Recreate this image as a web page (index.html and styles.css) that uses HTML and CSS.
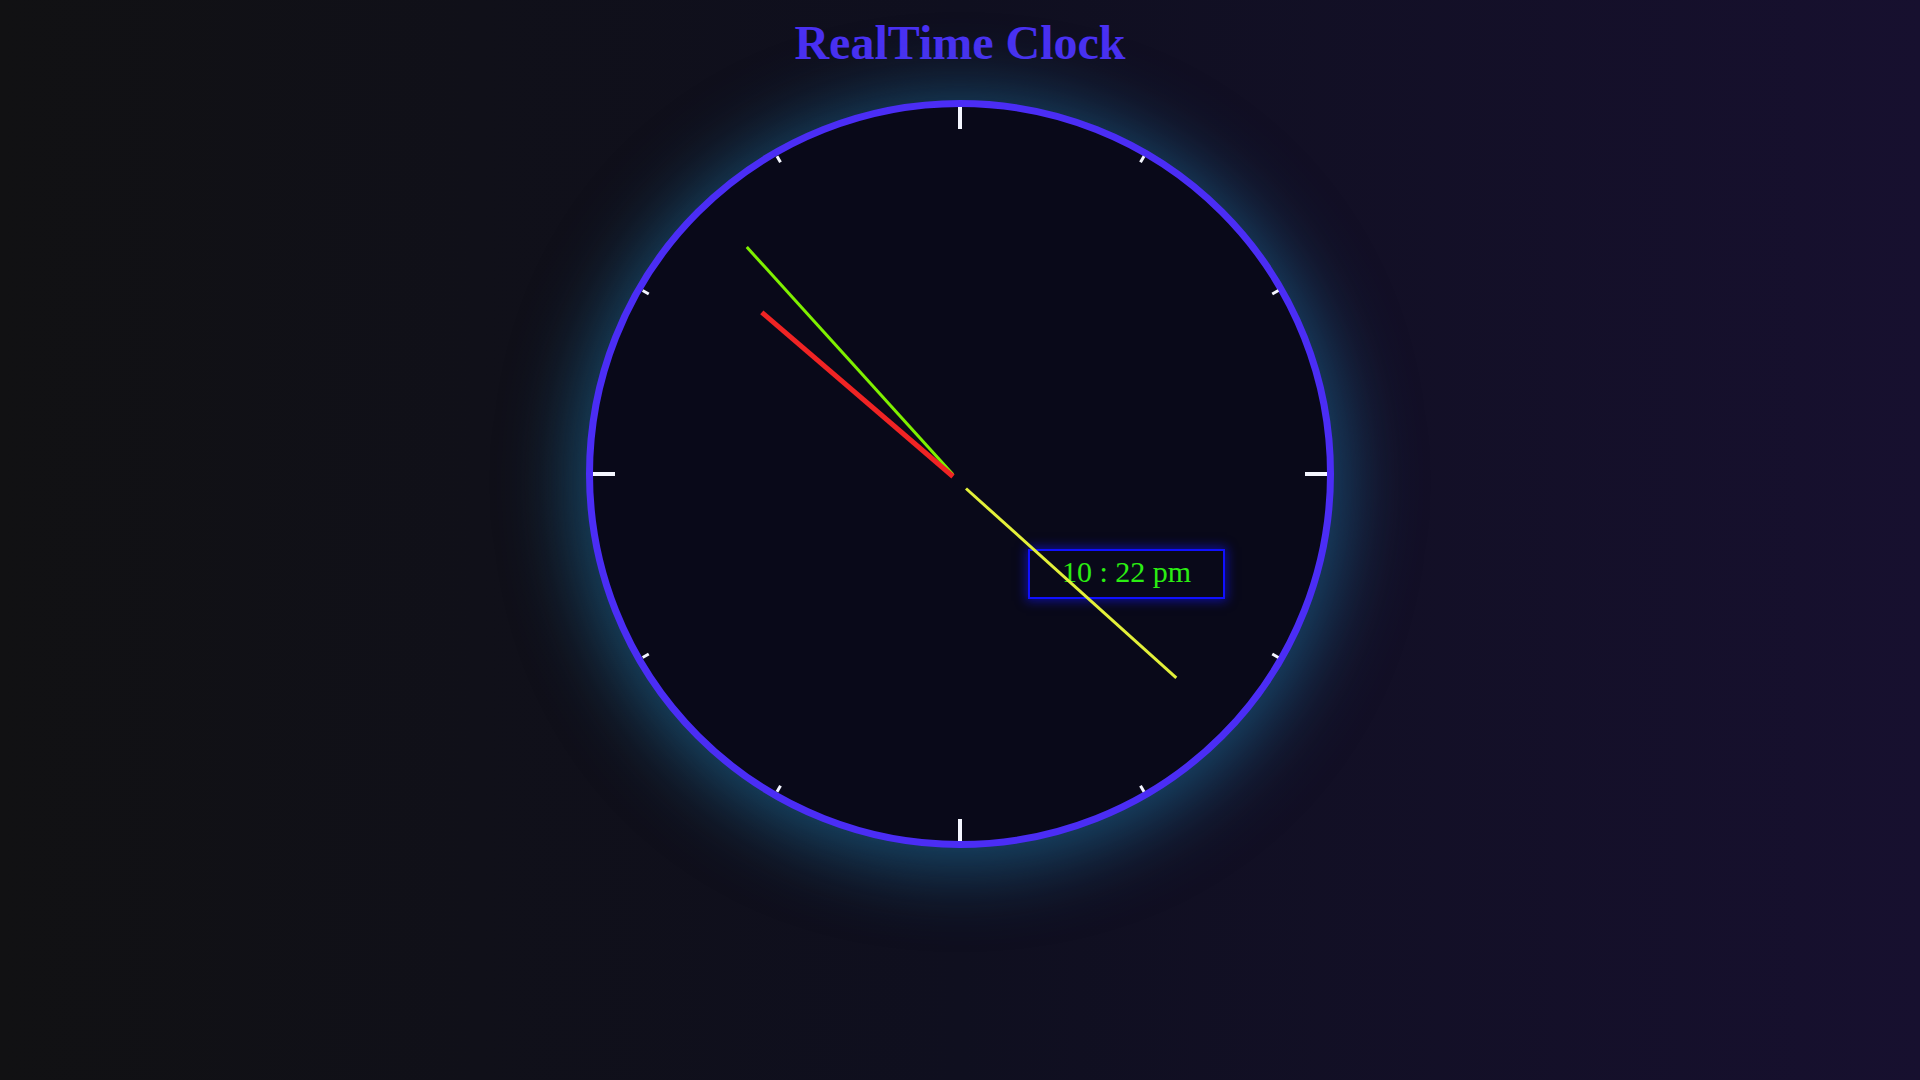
FILE: index.html
```html
<!DOCTYPE html>
<html lang="en">
<head>
<meta charset="utf-8">
<title>RealTime Clock</title>
<link rel="stylesheet" href="styles.css">
</head>
<body>
  <h1 class="title">RealTime Clock</h1>
  <div class="clock">
    <div class="tick big t0"></div>
    <div class="tick small t1"></div>
    <div class="tick small t2"></div>
    <div class="tick big t3"></div>
    <div class="tick small t4"></div>
    <div class="tick small t5"></div>
    <div class="tick big t6"></div>
    <div class="tick small t7"></div>
    <div class="tick small t8"></div>
    <div class="tick big t9"></div>
    <div class="tick small t10"></div>
    <div class="tick small t11"></div>
    <div class="digital">10 : 22 pm</div>
    <div class="hand second"></div>
    <div class="hand hour"></div>
    <div class="hand minute"></div>
  </div>
</body>
</html>
```
FILE: styles.css
```css
html, body {
  margin: 0;
  padding: 0;
}
body {
  width: 1920px;
  height: 1080px;
  overflow: hidden;
  background: linear-gradient(90deg, #111113 0%, #0f0f1f 50%, #17102f 100%);
  font-family: "Liberation Serif", "Times New Roman", serif;
}
.title {
  margin: 0;
  padding-top: 15px;
  line-height: 55px;
  font-size: 48px;
  font-weight: bold;
  text-align: center;
  color: #4a30f2;
}
.clock {
  position: relative;
  box-sizing: border-box;
  width: 748px;
  height: 748px;
  margin: 30px auto 0;
  border: 7px solid #4b2df5;
  border-radius: 50%;
  background: #090919;
  box-shadow: 0 8px 75px 8px rgba(30, 125, 175, 0.6);
}
.tick {
  position: absolute;
  top: 0;
  background: #f4f6ff;
}
.tick.big {
  left: 365px;
  width: 4px;
  height: 22px;
  transform-origin: 2px 367px;
}
.tick.small {
  left: 365.5px;
  width: 3px;
  height: 7px;
  transform-origin: 1.5px 367px;
}
.t1 { transform: rotate(30deg); }
.t2 { transform: rotate(60deg); }
.t3 { transform: rotate(90deg); }
.t4 { transform: rotate(120deg); }
.t5 { transform: rotate(150deg); }
.t6 { transform: rotate(180deg); }
.t7 { transform: rotate(210deg); }
.t8 { transform: rotate(240deg); }
.t9 { transform: rotate(270deg); }
.t10 { transform: rotate(300deg); }
.t11 { transform: rotate(330deg); }
.digital {
  position: absolute;
  left: 435px;
  top: 442px;
  box-sizing: border-box;
  width: 197px;
  height: 50px;
  padding-top: 4px;
  border: 2px solid #1010ff;
  box-shadow: 0 0 10px 2px rgba(20, 20, 255, 0.55);
  color: #2bee12;
  font-size: 30px;
  line-height: 34px;
  text-align: center;
}
.hand {
  position: absolute;
  transform-origin: 0 50%;
}
.hand.second {
  left: 360px;
  top: 366px;
  width: 307px;
  height: 3px;
  background: #7ff000;
  transform: rotate(-132.2deg);
}
.hand.hour {
  left: 360px;
  top: 366.5px;
  width: 252px;
  height: 5px;
  background: #f02424;
  transform: rotate(-139.35deg);
}
.hand.minute {
  left: 372.5px;
  top: 380px;
  width: 283px;
  height: 3px;
  background: #e3f03a;
  transform: rotate(42deg);
}
```
